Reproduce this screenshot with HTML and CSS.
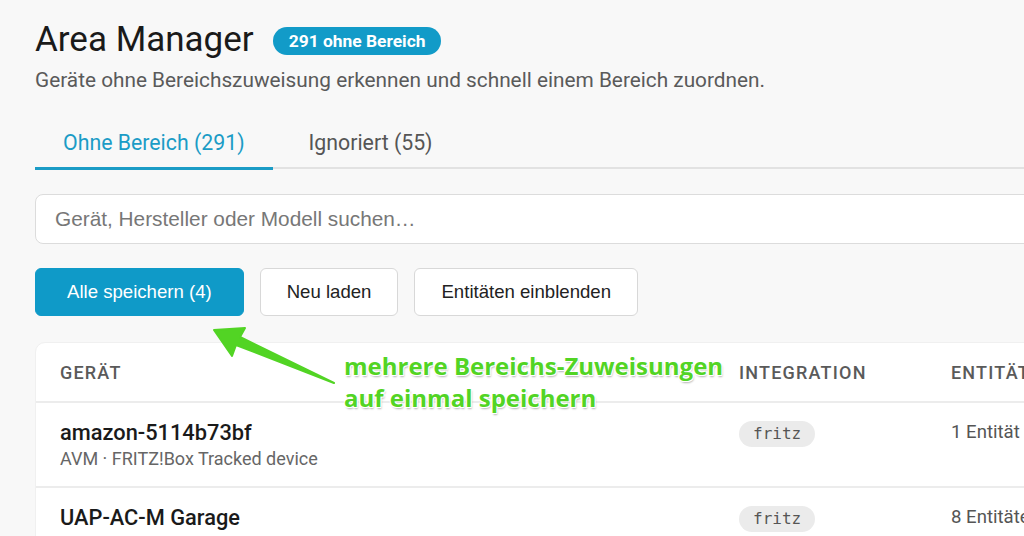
FILE: index.html
```html
<!DOCTYPE html>
<html lang="de">
<head>
    <meta charset="UTF-8">
    <meta name="viewport" content="width=device-width, initial-scale=1.0">
    <title>Area Manager</title>
    <link rel="stylesheet" href="styles.css">
</head>
<body>
    <div class="page">
        <!-- Header -->
        <div class="title-row">
            <h1>Area Manager</h1>
            <span class="badge">291 ohne Bereich</span>
        </div>
        <p class="subtitle">Geräte ohne Bereichszuweisung erkennen und schnell einem Bereich zuordnen.</p>

        <!-- Tabs -->
        <div class="tabs">
            <div class="tab active">Ohne Bereich (291)</div>
            <div class="tab">Ignoriert (55)</div>
        </div>

        <input class="search" type="text" placeholder="Gerät, Hersteller oder Modell suchen…">

        <div class="actions">
            <button class="btn primary">Alle speichern (4)</button>
            <button class="btn">Neu laden</button>
            <button class="btn">Entitäten einblenden</button>
        </div>

        <!-- Device table -->
        <div class="device-table">
            <div class="row head">
                <div>Gerät</div>
                <div>Integration</div>
                <div>Entitäten</div>
            </div>
            <div class="row">
                <div>
                    <div class="dev-name">amazon-5114b73bf</div>
                    <div class="dev-meta">AVM · FRITZ!Box Tracked device</div>
                </div>
                <div><span class="chip">fritz</span></div>
                <div class="count">1 Entität</div>
            </div>
            <div class="row">
                <div>
                    <div class="dev-name">UAP-AC-M Garage</div>
                    <div class="dev-meta">Ubiquiti · UAP-AC-M</div>
                </div>
                <div><span class="chip">fritz</span></div>
                <div class="count">8 Entitäten</div>
            </div>
        </div>

        <!-- Annotation overlay -->
        <svg class="arrow" width="140" height="70" viewBox="205 320 140 70">
            <polygon points="214,330 245,328 240,337 334,383 236,345 232,356"
                     fill="#52d424" stroke="#52d424" stroke-width="2" stroke-linejoin="round"/>
        </svg>
        <div class="note">mehrere Bereichs-Zuweisungen<br>auf einmal speichern</div>
    </div>
</body>
</html>
```

FILE: styles.css
```css
* {
    margin: 0;
    padding: 0;
    box-sizing: border-box;
}

body {
    background-color: #f8f8f8;
    color: #1c1c1c;
    font-family: Roboto, "Noto Sans", sans-serif;
    overflow: hidden;
}

.page {
    position: relative;
    width: 1120px;
    padding: 20px 0 0 35px;
}

/* Header */
.title-row {
    display: flex;
    align-items: center;
    gap: 19px;
    height: 40px;
}

.title-row h1 {
    font-size: 35px;
    font-weight: 400;
    line-height: 40px;
    color: #1a1a1a;
}

.badge {
    background-color: #129bc8;
    color: #fff;
    font-size: 17.4px;
    font-weight: 700;
    line-height: 28px;
    padding: 0 16px;
    border-radius: 14px;
    margin-top: 2px;
}

.subtitle {
    margin-top: 8px;
    font-size: 20.8px;
    line-height: 24px;
    color: #5a5a5a;
}

/* Tabs */
.tabs {
    display: flex;
    margin-top: 26px;
    border-bottom: 2px solid #e2e2e2;
}

.tab {
    padding: 0 28px;
    height: 49px;
    line-height: 49px;
    font-size: 21.3px;
    color: #555;
}

.tab.active {
    color: #1b9cc6;
    border-bottom: 3px solid #1b9cc6;
    margin-bottom: -3px;
    height: 52px;
}

.tab + .tab {
    margin-left: 8px;
}

/* Search */
.search {
    display: block;
    width: 100%;
    height: 50px;
    margin-top: 25px;
    padding: 0 19px;
    border: 1px solid #dcdcdc;
    border-radius: 8px;
    background-color: #fff;
    font-family: "Liberation Sans", Arial, sans-serif;
    font-size: 20.8px;
    outline: none;
}

.search::placeholder {
    color: #777;
}

/* Buttons */
.actions {
    display: flex;
    gap: 16px;
    margin-top: 24px;
}

.btn {
    height: 48px;
    padding: 0 26px;
    border: 1px solid #d8d8d8;
    border-radius: 6px;
    background-color: #fff;
    color: #222;
    font-family: "Liberation Sans", Arial, sans-serif;
    font-size: 18.6px;
}

.btn.primary {
    background-color: #0f9ac8;
    border-color: #0f9ac8;
    color: #fff;
    padding: 0 31px;
}

/* Table */
.device-table {
    margin-top: 26px;
    background-color: #fff;
    border-radius: 10px;
    border: 1px solid #f0f0f0;
}

.row {
    display: grid;
    grid-template-columns: 679px 212px 1fr;
    align-items: start;
    padding: 16px 24px 0;
    border-bottom: 2px solid #ececec;
    height: 85px;
}

.row.head {
    height: 60px;
    padding-top: 0;
    align-items: center;
    font-size: 18px;
    font-weight: 500;
    letter-spacing: 1.2px;
    text-transform: uppercase;
    color: #5a5a5a;
}

.dev-name {
    font-size: 21.8px;
    font-weight: 500;
    color: #1a1a1a;
    line-height: 28px;
}

.dev-meta {
    font-size: 18px;
    color: #666;
    line-height: 24px;
}

.row .chip {
    display: inline-block;
    margin-top: 2px;
    background-color: #ebebeb;
    color: #555;
    font-family: "DejaVu Sans Mono", monospace;
    font-size: 16px;
    line-height: 26px;
    padding: 0 14px;
    border-radius: 13px;
}

.count {
    font-size: 18.6px;
    line-height: 26px;
    color: #555;
}

/* Annotation */
.arrow {
    position: absolute;
    left: 205px;
    top: 320px;
}

.note {
    position: absolute;
    left: 344px;
    top: 350px;
    font-family: "Open Sans", sans-serif;
    font-size: 24px;
    font-weight: 700;
    line-height: 32px;
    color: #52d424;
    text-shadow: -1px -1px 0 #fff, 1px -1px 0 #fff, -1px 1px 0 #fff, 1px 1px 0 #fff, 1px 2px 2px rgba(0, 0, 0, 0.3);
}
```
